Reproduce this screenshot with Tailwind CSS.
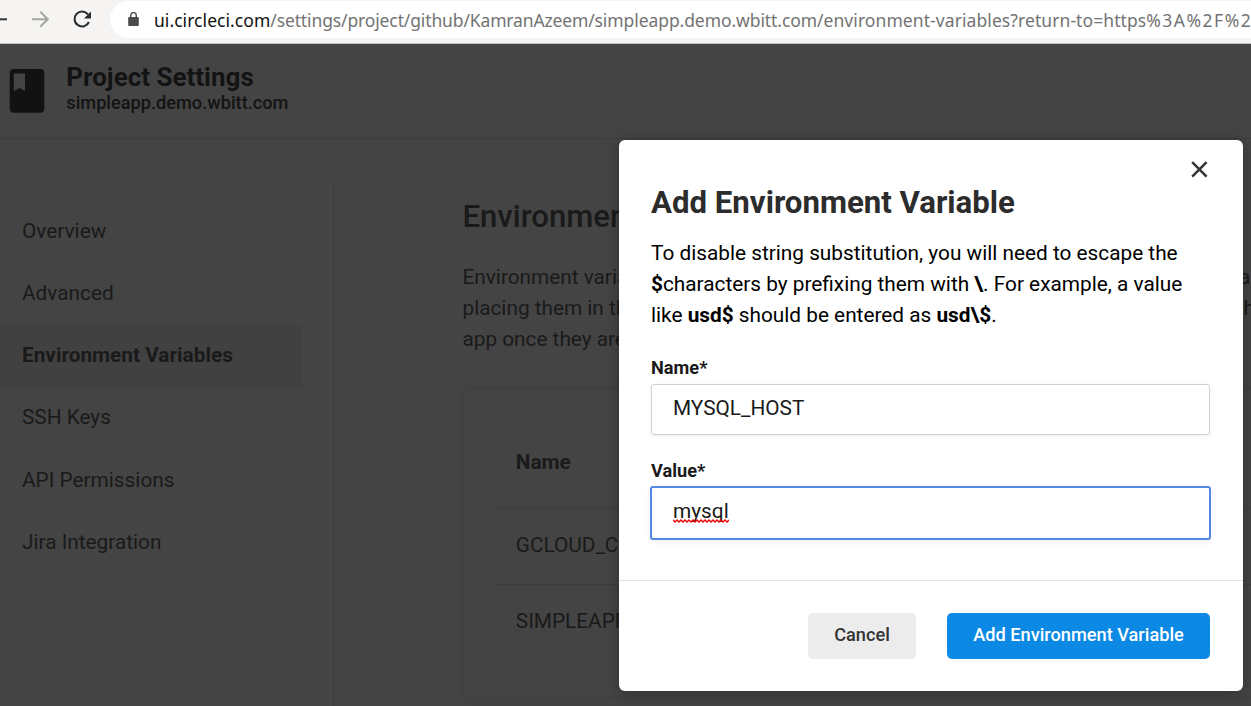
<!DOCTYPE html>
<html lang="en">
<head>
<meta charset="utf-8">
<title>Project Settings</title>
<script src="https://cdn.jsdelivr.net/npm/@tailwindcss/browser@4"></script>
</head>
<body class="h-[706px] w-[1251px] overflow-hidden bg-[#444444] font-[Roboto,sans-serif] text-[20.800px] text-[#1a1a1a]">
<div class="relative flex h-[706px] flex-col overflow-hidden">
  <!-- Browser toolbar -->
  <div class="flex h-[44px] shrink-0 border-b border-[#c4c2be] bg-[#f5f4f2]">
    <svg class="h-[43px] w-[110px] shrink-0" viewBox="0 0 110 43" fill="none">
      <path d="M0 19.3H7" stroke="#30363a" stroke-width="2"/>
      <path d="M32 19.3H47M40.3 11.8l7.5 7.5-7.5 7.5" stroke="#a5a5a4" stroke-width="2"/>
      <path d="M88 14.4A7.5 7.5 0 1 0 88.9 22" stroke="#262c30" stroke-width="2.1"/>
      <path d="M91 11.5V18.5H84Z" fill="#262c30"/>
    </svg>
    <div class="mt-px flex h-[37px] flex-1 items-center overflow-hidden rounded-l-full bg-white pl-[18px]">
      <svg class="h-[15px] w-[11px] shrink-0" viewBox="0 0 11 15" fill="none">
        <rect x="0.2" y="5" width="10.6" height="9" rx="1.2" fill="#4b4b4b"/>
        <path d="M2.7 6V3.4a2.8 2.8 0 0 1 5.6 0V6" stroke="#4b4b4b" stroke-width="1.4"/>
      </svg>
      <p class="ml-[15px] whitespace-nowrap pt-px font-['Noto_Sans',sans-serif] text-[17.500px] leading-[37px] text-[#737373]"><span class="tracking-[0.05px] text-[#111]">ui.circleci.com</span><span class="tracking-[-0.13px]">/settings/project/github/</span><span class="tracking-[-0.15px]">KamranAzeem/</span><span class="tracking-[-0.08px]">simpleapp.demo.wbitt.com/</span><span class="tracking-[0.08px]">environment-variables?return-to=https</span><span class="tracking-[1.500px]">%3A%2F%2</span></p>
    </div>
  </div>

  <!-- Project header -->
  <header class="flex h-[95px] shrink-0 items-start border-b border-[#3c3c3c] pl-[9px] pt-[18px]">
    <svg class="mt-[6px] h-[46px] w-[36px]" viewBox="0 0 36 46">
      <path fill="#121212" fill-rule="evenodd" d="M5 1H31Q35.300 1 35.300 5V40.500Q35.300 44.700 31 44.700H5Q.7 44.700 .7 40.500V5Q.7 1 5 1ZM4.800 5.400V23L10.400 20 16 23V5.400Z"/>
    </svg>
    <div class="ml-[21.300px] text-[#131313]">
      <h1 class="text-[26px] font-bold leading-[30px]">Project Settings</h1>
      <p class="text-[18.200px] font-medium leading-[21px]">simpleapp.demo.wbitt.com</p>
    </div>
  </header>

  <main class="flex flex-1">
    <nav class="mt-[41px] flex w-[334px] shrink-0 flex-col border-r border-[#3d3d3d] pr-[31px] pt-[20.800px]">
      <a class="flex h-[62.300px] items-center pb-px pl-[22px]">Overview</a>
      <a class="flex h-[62.300px] items-center pb-px pl-[22px]">Advanced</a>
      <a class="flex h-[62.300px] items-center bg-[#414141] pb-px pl-[22px] font-bold">Environment Variables</a>
      <a class="flex h-[62.300px] items-center pb-[2px] pl-[22px]">SSH Keys</a>
      <a class="flex h-[62.300px] items-center pb-px pl-[22px]">API Permissions</a>
      <a class="flex h-[62.300px] items-center pb-px pl-[22px]">Jira Integration</a>
    </nav>
    <section class="ml-[128.500px] w-[830px] shrink-0 pt-[57px]">
      <h2 class="text-[31.100px] font-medium leading-[42px]">Environment Variables</h2>
      <p class="mt-[24px] whitespace-nowrap text-[20.780px] leading-[31px]">Environment variables let you add sensitive data (e.g. API keys) to your jobs rather than<br>placing them in the repository. The value of the variables cannot be read or edited in the<br>app once they are set.</p>
      <div class="mt-[33px] h-[310px] rounded-md border border-[#3f3f3f] px-[32px] pt-[26px] shadow-[0_1px_10px_rgba(0,0,0,0.06)]">
        <div class="flex h-[94px] items-center border-b border-[#3c3c3c] pl-[20.300px] pt-[2px] font-bold">Name</div>
        <div class="flex h-[76px] items-center border-b border-[#3c3c3c] pb-px pl-[20.300px]">GCLOUD_CREDENTIALS</div>
        <div class="flex h-[74px] items-center pl-[20.300px]">SIMPLEAPP_TOKEN</div>
      </div>
    </section>
  </main>

  <!-- Dialog -->
  <div role="dialog" class="absolute left-[619px] top-[140px] flex h-[551px] w-[624px] flex-col rounded-md bg-white shadow-[0_2px_14px_rgba(0,0,0,0.3)]">
    <div class="flex h-[40px] shrink-0 items-end justify-end pr-[34px]">
      <svg class="h-[21px] w-[20px]" viewBox="0 0 20 21" fill="none"><path d="M3.200 3.200 17.600 17.600M17.600 3.200 3.200 17.600" stroke="#343434" stroke-width="2.500"/></svg>
    </div>
    <div class="pl-[32px] pr-[33px]">
      <h2 class="mt-[3px] text-[31.200px] font-bold leading-[40px] text-[#2c2c2c]">Add Environment Variable</h2>
      <p class="mt-[15px] whitespace-nowrap leading-[31px] text-black">To disable string substitution, you will need to escape the<br><b>$</b>characters by prefixing them with <b>\</b>. For example, a value<br>like <b>usd$</b> should be entered as <b>usd\$</b>.</p>
      <div class="mt-[26px] text-[18.200px] font-bold leading-[21px]">Name*</div>
      <div class="mt-[6px] flex h-[51px] items-center rounded-[3px] border border-[#d0d0d0] pb-[2px] pl-[21px] shadow-[0_2px_6px_rgba(0,0,0,0.06)]">MYSQL_HOST</div>
      <div class="mt-[25px] text-[18.200px] font-bold leading-[21px]">Value*</div>
      <div class="-mx-px mt-[5px] flex h-[54px] items-center rounded-[3px] border-2 border-[#5687e5] pb-[2px] pl-[21px] shadow-[0_2px_6px_rgba(0,0,0,0.06)]"><span class="relative">mysql<svg class="absolute left-0 top-[23px] h-[4px] w-[56px]" viewBox="0 0 56 4" fill="none"><path d="M0 1 2 3 4 1 6 3 8 1 10 3 12 1 14 3 16 1 18 3 20 1 22 3 24 1 26 3 28 1 30 3 32 1 34 3 36 1 38 3 40 1 42 3 44 1 46 3 48 1 50 3 52 1 54 3 56 1" stroke="#f00000" stroke-width="1.400"/></svg></span></div>
    </div>
    <div class="mt-auto flex h-[111px] items-start justify-end gap-[31px] border-t border-[#e3e3e3] pr-[33px] pt-[32px] text-[18.200px] font-medium">
      <button class="flex h-[46px] w-[108px] items-center justify-center rounded-[5px] bg-[#ececec] pb-[2px] text-[#343434]">Cancel</button>
      <button class="flex h-[46px] w-[263px] items-center justify-center rounded-[5px] bg-[#0b89e4] pb-[2px] text-white">Add Environment Variable</button>
    </div>
  </div>
</div>
</body>
</html>
